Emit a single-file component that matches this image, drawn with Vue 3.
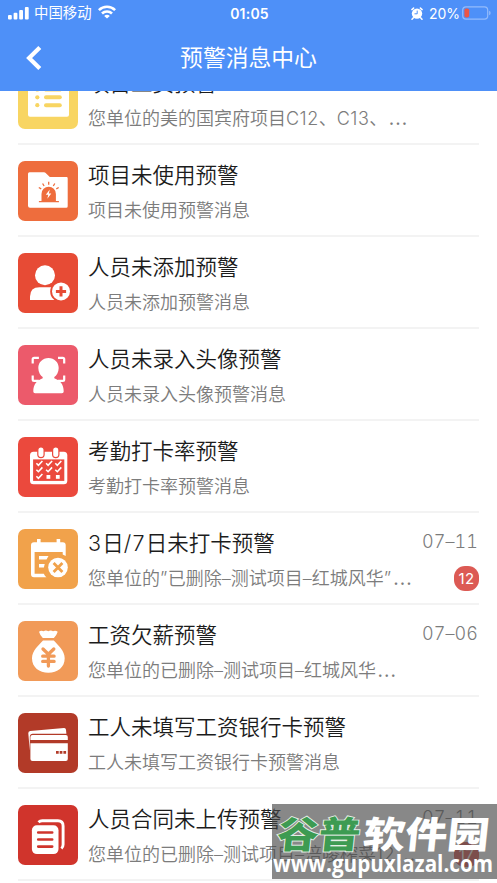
<script setup>
const rows = [
  { icon: 'list', color: '#f8d562', title: '项目工资预警', desc: '您单位的美的国宾府项目C12、C13、…' },
  { icon: 'siren', color: '#ee6d3d', title: '项目未使用预警', desc: '项目未使用预警消息' },
  { icon: 'add', color: '#e74b35', title: '人员未添加预警', desc: '人员未添加预警消息' },
  { icon: 'face', color: '#ec5a6b', title: '人员未录入头像预警', desc: '人员未录入头像预警消息' },
  { icon: 'check', color: '#eb493d', title: '考勤打卡率预警', desc: '考勤打卡率预警消息' },
  { icon: 'missed', color: '#f1a24b', title: '3日/7日未打卡预警', desc: '您单位的”已删除–测试项目–红城风华”…', date: '07–11', count: 12 },
  { icon: 'money', color: '#f19a58', title: '工资欠薪预警', desc: '您单位的已删除–测试项目–红城风华…', date: '07–06' },
  { icon: 'card', color: '#b23a28', title: '工人未填写工资银行卡预警', desc: '工人未填写工资银行卡预警消息' },
  { icon: 'docs', color: '#d0342c', title: '人员合同未上传预警', desc: '您单位的已删除–测试项目–涪陵榨菜12…', date: '07–11', count: 17 },
]
const checks = [[21.3, 26], [31, 26], [40.2, 26], [21.3, 32.4], [31, 32.4], [40.2, 32.4], [21.3, 39]]

// Splits a string so that Latin runs and the trailing ellipsis get their own tracking.
const runs = (text) =>
  text.split(/([A-Z0-9/”]+|…)/).filter(Boolean).map((t) => ({
    t,
    kind: t === '…' ? 'dots' : /^[A-Z0-9/”]/.test(t) ? 'latin' : 'han',
  }))
</script>

<template>
  <div class="screen">
    <header class="top">
      <div class="status">
        <div class="side">
          <svg class="signal" width="21" height="14" viewBox="0 0 21 14" fill="#fff">
            <rect x="0" y="9" width="3.8" height="4.6" rx="1" /><rect x="5.6" y="6.8" width="3.8" height="6.8" rx="1" />
            <rect x="11.2" y="4" width="3.8" height="9.6" rx="1" /><rect x="16.9" y="1" width="3.8" height="12.6" rx="1" />
          </svg>
          <span class="carrier">中国移动</span>
          <svg class="wifi" width="18" height="14" viewBox="0 0 18 14" fill="none" stroke="#fff" stroke-width="2.6">
            <path d="M.9 5.1a11.6 11.6 0 0 1 16.2 0M4 8.5a7.1 7.1 0 0 1 10 0" />
            <path d="M9 13.6 6.2 10.9a3.9 3.9 0 0 1 5.6 0z" fill="#fff" stroke="none" />
          </svg>
        </div>
        <span class="clock">01:05</span>
        <div class="side right">
          <svg width="12" height="13" viewBox="0 0 12 13">
            <circle cx="6" cy="6.6" r="5.2" fill="#fff" />
            <path d="M.9 2.6 2.6 1.1M11.1 2.6 9.4 1.1M2.4 10.8 1 12.3M9.6 10.8l1.4 1.5" stroke="#fff" stroke-width="1.5" stroke-linecap="round" />
            <path d="M6.2 3.6v3.2H3.5" fill="none" stroke="#4e90f8" stroke-width="1" />
          </svg>
          <span class="percent">20%</span>
          <svg width="29" height="14" viewBox="0 0 29 14">
            <rect x=".7" y=".9" width="25" height="12.2" rx="3.3" fill="none" stroke="#94bbfb" stroke-width="1.2" />
            <rect x="2.4" y="2.5" width="4.8" height="9" rx="1.8" fill="#ec5545" />
            <path d="M27.1 4.8q1.5.5 1.5 2.2t-1.5 2.2z" fill="#94bbfb" />
          </svg>
        </div>
      </div>
      <div class="nav">
        <svg class="back" width="16" height="26" viewBox="0 0 16 26" fill="none" stroke="#fff" stroke-width="4.2">
          <path d="M13.8 2.4 3.1 13l10.7 10.6" />
        </svg>
        <h1>预警消息中心</h1>
      </div>
    </header>

    <main>
      <div class="list">
        <article v-for="r in rows" :key="r.icon" class="row">
          <svg class="icon" width="60" height="60" viewBox="0 0 60 60" fill="#fff">
            <rect width="60" height="60" rx="7" :fill="r.color" />
            <g v-if="r.icon === 'list'">
              <rect x="10" y="9" width="41" height="38.8" rx="2" />
              <g :fill="r.color">
                <circle cx="19.3" cy="20.5" r="2.1" /><circle cx="19.3" cy="28.3" r="2.1" /><circle cx="19.3" cy="36.2" r="2.1" />
                <rect x="26" y="18.5" width="17.8" height="4" rx="2" /><rect x="26" y="26.3" width="17.8" height="4" rx="2" /><rect x="26" y="34.2" width="17.8" height="4" rx="2" />
              </g>
            </g>
            <g v-else-if="r.icon === 'siren'">
              <path d="M11.5 11.3h14.6a2 2 0 0 1 1.3.5l4.4 4.3h16.7a1.2 1.2 0 0 1 1.2 1.2v27.9a1.5 1.5 0 0 1-1.5 1.5H12a2 2 0 0 1-2-2V12.8a1.5 1.5 0 0 1 1.5-1.5z" />
              <path d="M23.5 40v-7.1a7.2 7.2 0 0 1 14.4 0V40z" :fill="r.color" />
              <path d="M20.9 40.6h20M30.7 20.7v3.1M24.6 22.5l1.5 2.5M36.8 22.5 35.3 25M20.8 26.5l2.4 1.4M40.7 26.5l-2.4 1.4" fill="none" :stroke="r.color" stroke-width="1.3" />
              <path d="m31.8 28.6-4 5.2h2.5l-1 4 4-5.3h-2.5z" />
            </g>
            <g v-else-if="r.icon === 'add'">
              <circle cx="27" cy="22.3" r="10" />
              <path d="M12 47v-3.5q0-9.3 9.5-9.3H38V47z" />
              <circle cx="43" cy="38.4" r="10.8" :fill="r.color" /><circle cx="43" cy="38.4" r="9" />
              <path d="M43 33.3v10.2M37.9 38.4h10.2" :stroke="r.color" stroke-width="3" />
            </g>
            <g v-else-if="r.icon === 'face'">
              <path d="M14.7 18.5v-4.2q0-1.4 1.4-1.4h4.8M40 12.9h4.8q1.4 0 1.4 1.4v4.2M14.7 30.5v4q0 1.4 1.4 1.4h4.8M40 35.9h4.8q1.4 0 1.4-1.4v-4" fill="none" stroke="#fff" stroke-width="2.2" />
              <path d="M30.5 13c5.9 0 10.2 4.4 10.2 10 0 4.5-2.3 7.5-4.4 9.1v1.1c5.9 2.1 9.4 6.4 9.4 13.3q0 1.8-1.8 1.8H17.1q-1.8 0-1.8-1.8c0-6.9 3.5-11.2 9.4-13.3v-1.1c-2.1-1.6-4.4-4.6-4.4-9.1 0-5.6 4.3-10 10.2-10z" />
            </g>
            <g v-else-if="r.icon === 'check'">
              <rect x="12" y="14.8" width="37.3" height="32.5" rx="3.5" />
              <rect x="15.1" y="22.4" width="31.2" height="21.5" :fill="r.color" />
              <g :stroke="r.color" stroke-width="1.2"><rect x="19.8" y="9.9" width="6.3" height="10.8" rx="3.1" /><rect x="34.6" y="9.9" width="6.3" height="10.8" rx="3.1" /></g>
              <path v-for="(c, i) in checks" :key="i" :d="`M${c[0] - 2.9} ${c[1] + 0.3}l2 2 4-4.3`" fill="none" stroke="#fff" stroke-width="1.6" />
              <rect x="28.5" y="38" width="3.8" height="3.8" /><rect x="37.9" y="38" width="3.8" height="3.8" />
            </g>
            <g v-else-if="r.icon === 'missed'">
              <path d="M16 13.3h3V10h3.6v3.3h16V10h3.6v3.3h2.5q3 0 3 3V27l-3-1.5V23H16.6v21.7h9.2q1 2.4 2.7 3.6H16q-3 0-3-3v-29q0-3 3-3z" />
              <path d="M21 27h9.5l-2 3.5H21zM21 35h5.7l-.8 3.6H21z" />
              <circle cx="40" cy="38.5" r="9.8" />
              <path d="m35.6 34.1 8.8 8.8m0-8.8-8.8 8.8" :stroke="r.color" stroke-width="2.8" />
            </g>
            <g v-else-if="r.icon === 'money'">
              <path d="M21 10.8q2.3-2 4.6-.5 2.2-1.8 4.7 0 2.5-1.8 4.7 0 2.3-1.5 4.7.5-1.1 3.6-3.8 6.3H24.8q-2.7-2.7-3.8-6.3z" />
              <path d="M25 19.4h10.8C40 24 46.7 29.5 46.7 37.3c0 9.2-7.2 14.4-16.3 14.4S14 46.5 14 37.3C14 29.5 20.8 24 25 19.4z" />
              <path d="m25 28 5.4 5.3 5.4-5.3M30.4 33v12M24.7 35.2h11.4M24.7 40.4h11.4" fill="none" :stroke="r.color" stroke-width="3.3" stroke-linecap="round" />
            </g>
            <g v-else-if="r.icon === 'card'">
              <path d="m12.2 18 33.8-3q1.8-.1 2 1.7l.4 4H14.7q-2.7 0-2.9 3v14L10.300 20.300Q10.200 18.200 12.200 18z" />
              <path d="M14.500 21.900h33.300q2 0 2 2V27H12.400v-3q0-2.100 2.100-2.100zM12.400 30.200h37.400v15.700q0 2-2 2H14.500q-2.100 0-2.100-2z" />
              <path d="M38 38h2.700v2.700H38zM41.700 38h2.700v2.700h-2.700zM45.400 38h2.700v2.700h-2.700z" :fill="r.color" />
            </g>
            <g v-else>
              <path d="M20.500 17.300q1.500-1.500 3.800-1.500h15.600q5.200 0 5.200 5.200v18.500q0 2.500-1.700 4" fill="none" stroke="#fff" stroke-width="2.9" />
              <rect x="13.9" y="20.3" width="26.6" height="28.8" rx="5" />
              <path d="M20.200 27.500h14M20.200 34.500h14M20.200 41.600h14" :stroke="r.color" stroke-width="2.6" stroke-linecap="round" />
            </g>
          </svg>
          <div class="body">
            <div class="line">
              <h2><span v-for="(s, i) in runs(r.title)" :key="i" :class="s.kind">{{ s.t }}</span></h2>
              <time v-if="r.date">{{ r.date }}</time>
            </div>
            <div class="line second">
              <p><span v-for="(s, i) in runs(r.desc)" :key="i" :class="s.kind">{{ s.t }}</span></p>
              <span v-if="r.count" class="count">{{ r.count }}</span>
            </div>
          </div>
        </article>
      </div>
    </main>

    <div class="mark">
      <svg width="225" height="75" viewBox="0 0 225 75">
        <g transform="translate(0 44) skewX(-6) scale(1 .92)" class="brand">
          <text x="4" y="0" textLength="83" lengthAdjust="spacingAndGlyphs" class="green">谷普</text>
          <text x="90" y="0" textLength="126" lengthAdjust="spacingAndGlyphs">软件园</text>
        </g>
        <text x="1" y="68" textLength="220" lengthAdjust="spacingAndGlyphs" class="url">www.gupuxlazal.com</text>
      </svg>
    </div>
  </div>
</template>

<style>
body { margin: 0; background: #fff; }
</style>

<style scoped>
.screen { position: relative; display: flex; flex-direction: column; width: 497px; height: 883px; overflow: hidden; background: #fff; font-family: Inter, "Noto Sans CJK SC", sans-serif; }
.top { flex: none; height: 91px; background: #4e90f8; color: #fff; }
.status { display: grid; grid-template-columns: 1fr auto 1fr; align-items: center; height: 26px; padding: 0 6px 0 8px; }
.side { display: flex; align-items: center; }
.signal { margin-bottom: 1px; }
.carrier { margin-left: 5px; font-size: 14.4px; line-height: 20px; }
.wifi { margin-left: 6px; margin-bottom: 2px; }
.clock { font-size: 14px; font-weight: 600; letter-spacing: .2px; }
.right { justify-content: flex-end; }
.percent { margin: 0 2px 0 6px; font-size: 14px; }
.nav { display: grid; grid-template-columns: 60px 1fr 60px; align-items: center; height: 64px; }
.back { margin-left: 26px; }
h1 { margin: 0; font-size: 22.8px; line-height: 32px; font-weight: 400; text-align: center; }
main { flex: 1; min-height: 0; overflow: hidden; }
.list { margin: -38px 18px 0; }
.row { display: flex; gap: 10px; box-sizing: border-box; height: 92px; padding-top: 16px; border-bottom: 2px solid #f3f3f3; }
.icon { flex: none; }
.body { flex: 1; min-width: 0; }
.line { display: flex; align-items: center; justify-content: space-between; height: 28px; white-space: nowrap; }
.second { height: 42px; }
h2 { margin: 0; font-size: 21.5px; line-height: 28px; font-weight: 350; color: #1c1c1c; }
h2 .latin { letter-spacing: 1.2px; }
p { margin: 2px 0 0; font-size: 18px; line-height: 28px; font-weight: 350; color: #7c7c7c; }
p .latin { letter-spacing: .5px; }
p .dots { margin-left: 1px; letter-spacing: 0; font-size: 23px; line-height: 20px; }
time { margin: -3px 1px 0 0; font-size: 18px; font-weight: 350; letter-spacing: .1px; font-variant-numeric: tabular-nums; color: #7c7c7c; }
.count { display: flex; align-items: center; justify-content: center; width: 25px; height: 25px; border-radius: 11px; background: #dc5a54; color: #fff; font-size: 15px; letter-spacing: .4px; }
.mark { position: absolute; left: 272px; top: 804px; width: 225px; height: 75px; background: rgba(72, 72, 72, .65); }
.mark svg { display: block; }
.brand { font: 900 40px "Noto Sans CJK SC", sans-serif; fill: #fff; }
.green { fill: #3d9b52; stroke: #e4eee5; stroke-width: 2px; paint-order: stroke; }
.url { font: 700 23.5px "Open Sans", sans-serif; fill: #fff; }
</style>
